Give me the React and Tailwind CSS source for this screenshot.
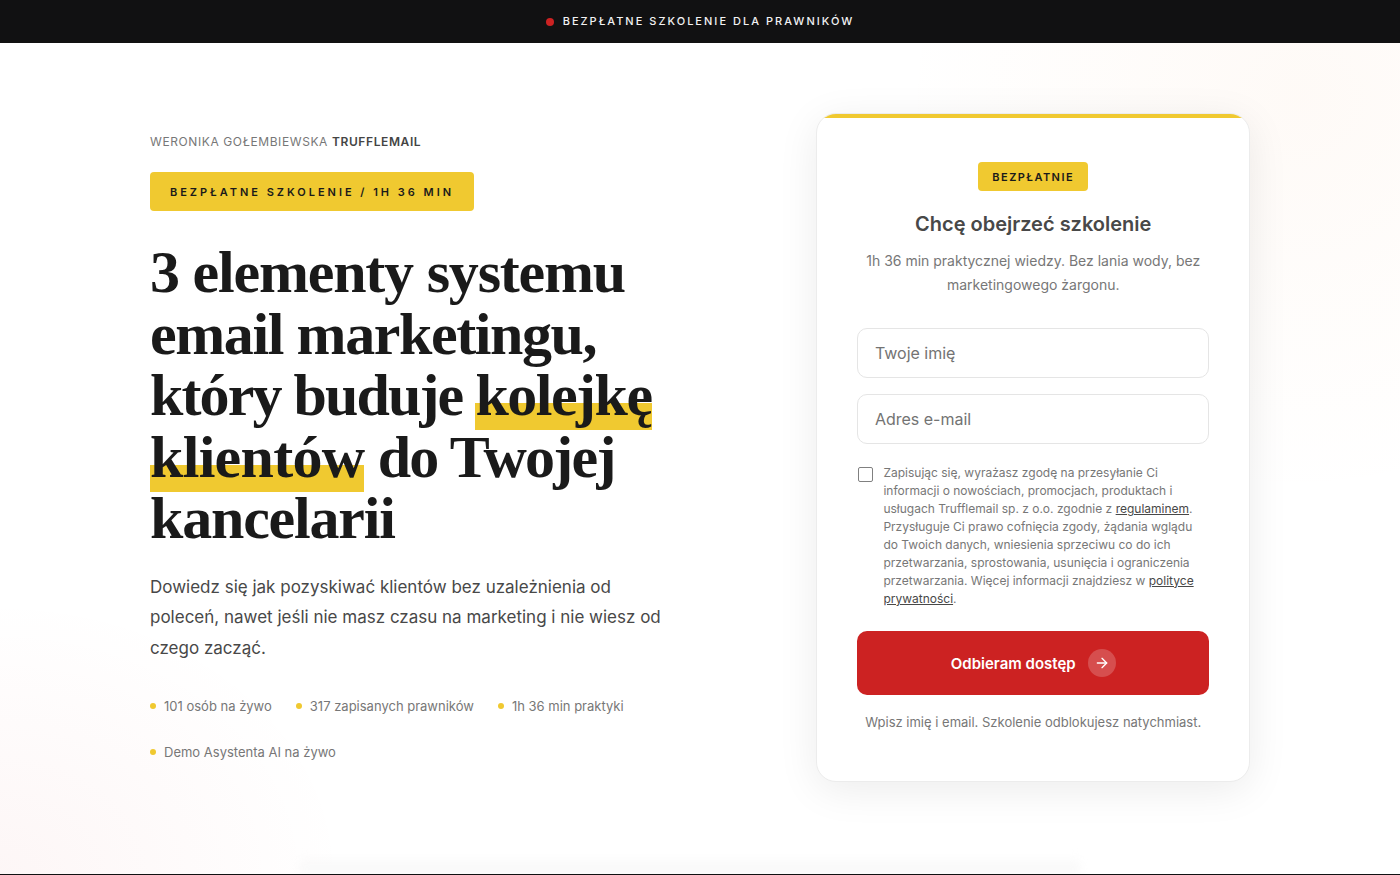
import React from "react";
import { ArrowRight } from "lucide-react";

const stats = ["101 osób na żywo", "317 zapisanych prawników", "1h 36 min praktyki", "Demo Asystenta AI na żywo"];

function Input({ placeholder }) {
  return (
    <input
      placeholder={placeholder}
      className="w-full h-[50px] rounded-[10px] border border-[#e5e5e5] bg-white px-[16.5px] text-[16px] text-[#444] placeholder:text-[#737373] outline-none"
    />
  );
}

export default function App() {
  return (
    <div className="relative h-[875px] overflow-hidden bg-white font-['Inter',sans-serif] text-[#444]">
      {/* tla */}
      <div className="absolute -left-[350px] bottom-[-280px] h-[560px] w-[700px] rounded-full bg-[radial-gradient(closest-side,rgba(205,32,32,0.04),transparent)]"></div>
      <div className="absolute -right-[300px] -top-[300px] h-[800px] w-[800px] rounded-full bg-[radial-gradient(closest-side,rgba(240,140,60,0.045),transparent)]"></div>

      <div className="relative flex h-[43px] items-center justify-center bg-[#111112]">
        <span className="mr-[9px] h-[8px] w-[8px] rounded-full bg-[#cc2222]"></span>
        <span className="text-[11px] font-medium tracking-[2.02px] text-[#f2f2f2]">BEZPŁATNE SZKOLENIE DLA PRAWNIKÓW</span>
      </div>

      <div className="relative mx-auto flex w-[1100px] items-start justify-between pt-[70px]">
        <div className="w-[520px] pt-[21px]">
          <p className="text-[12px] leading-[16px] tracking-[0.6px] text-[#777]">
            WERONIKA GOŁEMBIEWSKA <strong className="font-semibold text-[#444]">TRUFFLEMAIL</strong>
          </p>
          <div className="mt-[22px] inline-flex h-[39px] items-center rounded-[4px] bg-[#f0c930] px-[20px] pt-[1px] text-[11px] font-semibold tracking-[2.98px] text-[#1a1a1a]">
            BEZPŁATNE SZKOLENIE / 1H 36 MIN
          </div>
          <h1 className="mt-[31px] font-['Liberation_Serif',serif] text-[60px] font-bold leading-[61.6px] tracking-[-1.2px] text-[#1a1a1a]">
            3 elementy systemu
            <br />
            <span className="tracking-[-1.4px]">email marketingu,</span>
            <br />
            <span className="tracking-[-1.9px]">który buduje </span>
            <span className="bg-[linear-gradient(transparent_41px,#f0c930_41px)] pb-[2px] tracking-[-1.5px]">kolejkę</span>
            <br />
            <span className="bg-[linear-gradient(transparent_41px,#f0c930_41px)] pb-[2px] tracking-[-0.7px]">klientów</span>
            <span className="tracking-[-1.75px]"> do Twojej</span>
            <br />
            kancelarii
          </h1>
          <p className="mt-[21.6px] w-[520px] text-[17px] leading-[30.6px] text-[#484848]">
            Dowiedz się jak pozyskiwać klientów bez uzależnienia od poleceń, nawet jeśli nie masz czasu na marketing i nie wiesz od czego zacząć.
          </p>
          <ul className="mt-[31.4px] flex flex-wrap gap-x-[24px] gap-y-[24px]">
            {stats.map((s) => (
              <li key={s} className="flex items-center gap-[8px] text-[13px] leading-[22px] text-[#777]">
                <span className="h-[6px] w-[6px] rounded-full bg-[#f0c930]"></span>
                {s}
              </li>
            ))}
          </ul>
        </div>

        <div className="relative w-[433.6px] overflow-hidden rounded-[20px] border border-[#ececec] bg-white px-[40px] pb-[49px] pt-[48px] shadow-[0_8px_40px_rgba(0,0,0,0.08)]">
          <div className="absolute left-0 right-0 top-0 h-[4px] bg-[#f0c930]"></div>
          <div className="flex flex-col items-center text-center">
            <span className="flex h-[29px] items-center rounded-[4px] bg-[#f0c930] px-[14px] pt-[1px] text-[11px] font-semibold tracking-[1.45px] text-[#1a1a1a]">BEZPŁATNIE</span>
            <h2 className="mt-[18px] text-[20px] font-semibold leading-[30px] text-[#484848]">Chcę obejrzeć szkolenie</h2>
            <p className="mt-[10px] text-[14px] leading-[23.8px] text-[#777]">
              1h 36 min praktycznej wiedzy. Bez lania wody, bez marketingowego żargonu.
            </p>
          </div>
          <div className="mt-[31px] flex flex-col gap-[16px]">
            <Input placeholder="Twoje imię" />
            <Input placeholder="Adres e-mail" />
          </div>
          <label className="mt-[20px] flex gap-[10px]">
            <span className="ml-[1px] mt-[3px] h-[15px] w-[15px] shrink-0 rounded-[2px] border border-[#808080] bg-white"></span>
            <span className="text-[12px] leading-[18px] text-[#777]">
              Zapisując się, wyrażasz zgodę na przesyłanie Ci informacji o nowościach, promocjach, produktach i usługach Trufflemail sp. z o.o. zgodnie z <a className="text-[#484848] underline">regulaminem</a>. Przysługuje Ci prawo cofnięcia zgody, żądania wglądu do Twoich danych, wniesienia sprzeciwu co do ich przetwarzania, sprostowania, usunięcia i ograniczenia przetwarzania. Więcej informacji znajdziesz w <a className="text-[#484848] underline">polityce prywatności</a>.
            </span>
          </label>
          <button className="mt-[23px] flex h-[64px] w-full items-center justify-center gap-[12px] rounded-[10px] bg-[#cc2222] text-[15px] font-semibold text-white">
            <span className="pt-[4px]">Odbieram dostęp</span>
            <span className="flex h-[28px] w-[28px] items-center justify-center rounded-full bg-white/20">
              <ArrowRight size={16} strokeWidth={2} />
            </span>
          </button>
          <p className="mt-[17px] text-center text-[13px] leading-[20px] text-[#777]">Wpisz imię i email. Szkolenie odblokujesz natychmiast.</p>
        </div>
      </div>

      {/* poczatek kolejnej sekcji */}
      <div className="absolute bottom-[1px] left-[300px] right-[320px] h-[20px] bg-[linear-gradient(transparent,#f7f7f7)] blur-[4px]"></div>
      <div className="absolute bottom-0 left-0 right-0 h-[1px] bg-[#111112]"></div>
    </div>
  );
}
